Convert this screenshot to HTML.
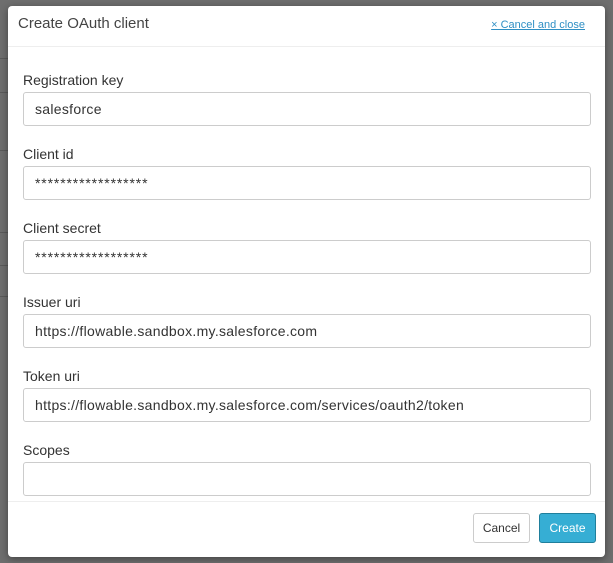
<!DOCTYPE html>
<html><head><style>
*{box-sizing:border-box;margin:0;padding:0}
body{width:613px;height:563px;background:#6e6e6e;font-family:"Liberation Sans",sans-serif;position:relative;overflow:hidden;color:#333}
.bgl{position:absolute;left:0;width:8px;height:1px;background:#5a5a5a}
.modal{position:absolute;left:8px;top:6px;width:597px;height:551px;background:#fff;border-radius:4px;box-shadow:0 2px 8px rgba(0,0,0,.4)}
.title{position:absolute;left:10px;top:9px;font-size:15px;color:#444}
.close{position:absolute;right:20px;top:13px;font-size:11px;color:#2f8fc4;text-decoration:underline}
.hr{position:absolute;left:0;right:0;height:1px;background:#eee}
.lbl{position:absolute;left:15px;font-size:14px;color:#333}
.inp{position:absolute;left:15px;width:568px;height:34px;border:1px solid #ccc;border-radius:3px;font-size:14px;letter-spacing:0.3px;padding:8px 11px;color:#333}
.st{letter-spacing:0.85px}
.btn{position:absolute;top:507px;height:30px;border-radius:3px;font-size:12px;text-align:center;line-height:28px}
</style></head><body>
<div class="bgl" style="top:58px"></div><div class="bgl" style="top:92px"></div><div class="bgl" style="top:150px"></div><div class="bgl" style="top:232px"></div><div class="bgl" style="top:265px"></div><div class="bgl" style="top:296px"></div>
<div class="modal">
<div class="title">Create OAuth client</div>
<div class="close">× Cancel and close</div>
<div class="hr" style="top:40px"></div>
<div class="lbl" style="top:66px">Registration key</div>
<div class="inp" style="top:86px">salesforce</div>
<div class="lbl" style="top:140px">Client id</div>
<div class="inp st" style="top:160px">******************</div>
<div class="lbl" style="top:214px">Client secret</div>
<div class="inp st" style="top:234px">******************</div>
<div class="lbl" style="top:288px">Issuer uri</div>
<div class="inp" style="top:308px">https://flowable.sandbox.my.salesforce.com</div>
<div class="lbl" style="top:362px">Token uri</div>
<div class="inp" style="top:382px">https://flowable.sandbox.my.salesforce.com/services/oauth2/token</div>
<div class="lbl" style="top:436px">Scopes</div>
<div class="inp" style="top:456px"></div>
<div class="hr" style="top:495px"></div>
<div class="btn" style="left:465px;width:57px;border:1px solid #ccc;color:#333">Cancel</div>
<div class="btn" style="left:531px;width:57px;background:#36aed4;border:1px solid #1f7f9c;color:#fff">Create</div>
</div>
</body></html>
